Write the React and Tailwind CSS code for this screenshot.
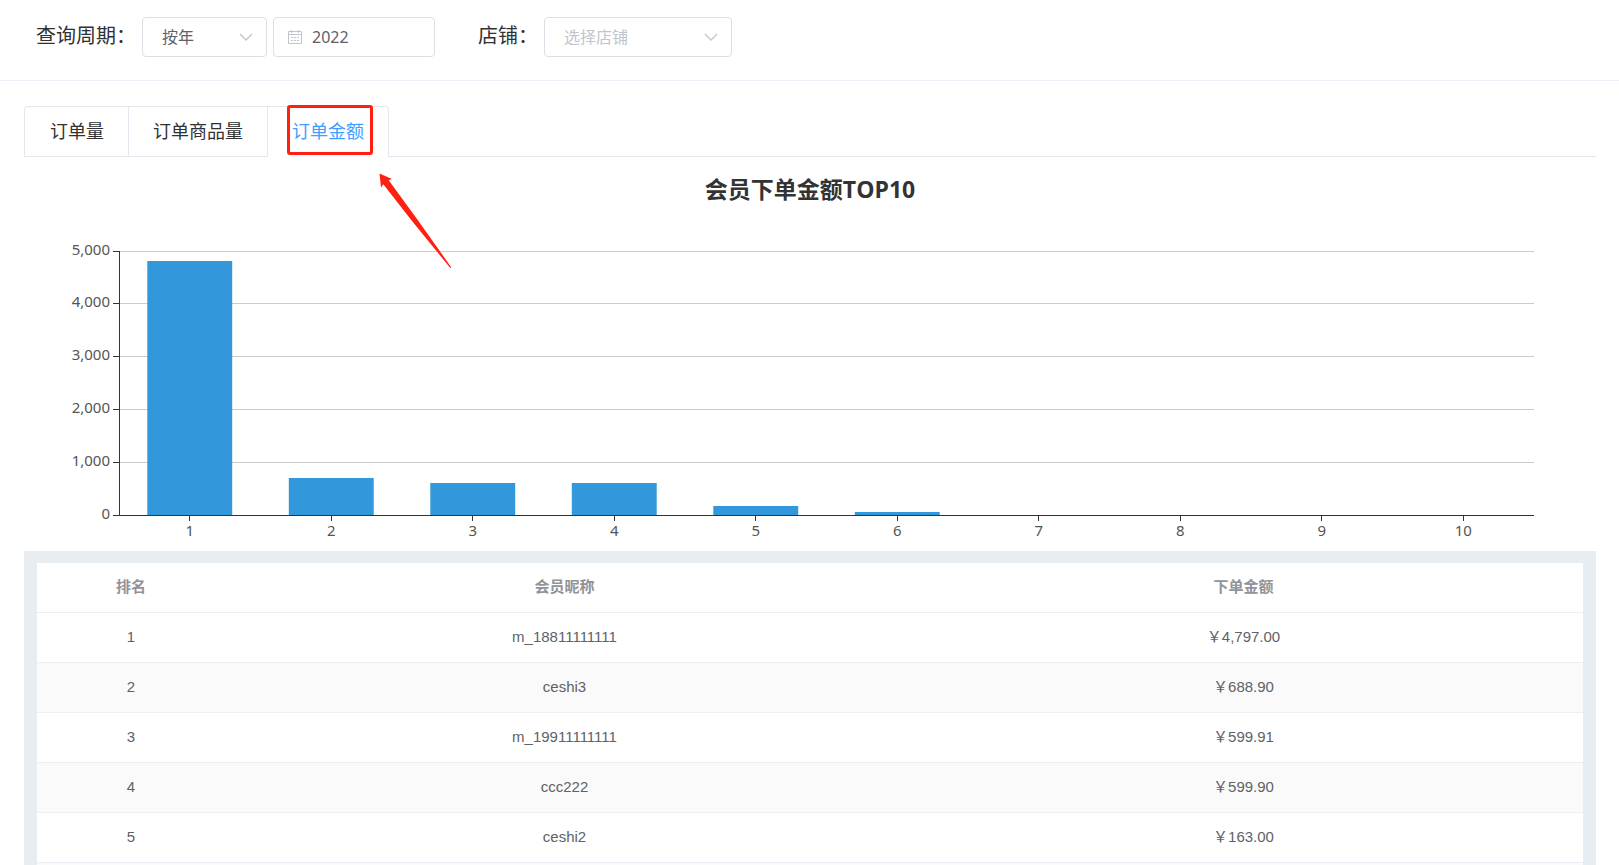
import React, { useState } from "react";

const tabs = ["订单量", "订单商品量", "订单金额"];

const rows = [
  { rank: 1, name: "m_18811111111", amount: "￥4,797.00" },
  { rank: 2, name: "ceshi3", amount: "￥688.90" },
  { rank: 3, name: "m_19911111111", amount: "￥599.91" },
  { rank: 4, name: "ccc222", amount: "￥599.90" },
  { rank: 5, name: "ceshi2", amount: "￥163.00" },
];

const values = [4797, 688.9, 599.91, 599.9, 163, 50, 0, 0, 0, 0];
const ticks = [0, 1000, 2000, 3000, 4000, 5000];
const MAX = 5000;
const PLOT_HEIGHT = 264;

const yOf = (v) => Math.floor(PLOT_HEIGHT * (1 - v / MAX));

function Chevron() {
  return (
    <svg
      viewBox="0 0 14 8"
      className="pointer-events-none absolute right-3.5 top-4 h-2 w-[14px]"
      fill="none"
      stroke="#c0c4cc"
      strokeWidth="1.3"
    >
      <path d="M1 1l6 6 6-6" />
    </svg>
  );
}

function CalendarIcon() {
  return (
    <svg
      viewBox="0 0 16 16"
      className="pointer-events-none absolute left-3.5 top-3 h-4 w-4"
      fill="none"
      stroke="#c0c4cc"
    >
      <path d="M1.5 2.5h13v12h-13z M1.5 5.5h13 M4.5 1v3 M11.5 1v3" />
      <path d="M4 8.5h2 M7 8.5h2 M10 8.5h2 M4 11.5h2 M7 11.5h2 M10 11.5h2" />
    </svg>
  );
}

function Filters() {
  const [period, setPeriod] = useState("year");
  const [year, setYear] = useState("2022");
  const [shop, setShop] = useState("");

  return (
    <header className="flex h-[81px] items-start border-b border-[#ebeef5] pl-9 pt-[17px]">
      <label htmlFor="period" className="w-[106px] text-xl leading-[38px]">
        查询周期：
      </label>
      <div className="relative">
        <select
          id="period"
          value={period}
          onChange={(e) => setPeriod(e.target.value)}
          className="h-10 w-[125px] appearance-none rounded border border-[#dcdfe6] bg-white pl-[19px] pt-0.5 text-base text-[#606266]"
        >
          <option value="year">按年</option>
        </select>
        <Chevron />
      </div>
      <div className="relative ml-1.5">
        <CalendarIcon />
        <input
          type="text"
          aria-label="年份"
          value={year}
          onChange={(e) => setYear(e.target.value)}
          className="h-10 w-[162px] rounded border border-[#dcdfe6] pl-[38px] font-['Noto_Sans'] text-base text-[#606266]"
        />
      </div>
      <label htmlFor="shop" className="ml-[43px] w-[66px] text-xl leading-[38px]">
        店铺：
      </label>
      <div className="relative">
        <select
          id="shop"
          value={shop}
          onChange={(e) => setShop(e.target.value)}
          className="h-10 w-[188px] appearance-none rounded border border-[#dcdfe6] bg-white pl-[19px] pt-0.5 text-base text-[#c0c4cc]"
        >
          <option value="">选择店铺</option>
        </select>
        <Chevron />
      </div>
    </header>
  );
}

function Tabs() {
  const [active, setActive] = useState(2);

  return (
    <div className="relative flex border-b border-[#e4e7ed]">
      <div role="tablist" className="-mb-px flex rounded-t border border-b-0 border-[#e4e7ed]">
        {tabs.map((tab, i) => (
          <button
            key={tab}
            type="button"
            role="tab"
            aria-selected={i === active}
            onClick={() => setActive(i)}
            className={`h-[50px] border-b text-lg ${
              i === 0 ? "pl-[25px] pr-6" : "border-l border-l-[#e4e7ed] px-6"
            } ${i === active ? "border-b-white text-[#409eff]" : "border-b-[#e4e7ed]"}`}
          >
            {tab}
          </button>
        ))}
      </div>
      {/* Callout on the amount tab */}
      <div className="pointer-events-none absolute left-[263px] -top-px h-[50px] w-[86px] rounded-[3px] border-3 border-[#ff2012]" />
      <svg
        viewBox="0 0 72 96"
        className="pointer-events-none absolute left-[355px] top-[67px] h-24 w-[72px]"
      >
        <path
          d="M0.5 0.5L13 6 9.7 7.3 38 46 72.3 94.3 71.3 95 33 48 4.3 11.3 2 14.5z"
          fill="#ff2012"
        />
      </svg>
    </div>
  );
}

function Chart() {
  return (
    <section className="h-[394px] pt-[18px]">
      <h2 className="text-center font-['Open_Sans','Noto_Sans_CJK_SC',sans-serif] text-[23px] leading-7 font-bold text-[#333]">
        会员下单金额TOP10
      </h2>
      <div className="ml-[95px] mr-[62px] mt-12 h-[264px]">
        <svg
          className="h-full w-full overflow-visible font-['Noto_Sans'] text-[15px]"
          role="img"
          aria-label="会员下单金额TOP10"
        >
          {ticks.map((t) => (
            <g key={t}>
              {t > 0 && (
                <line x1="0" x2="100%" y1={yOf(t)} y2={yOf(t)} stroke="#ccc" shapeRendering="crispEdges" />
              )}
              <line x1="-6" x2="0" y1={yOf(t)} y2={yOf(t)} stroke="#333" shapeRendering="crispEdges" />
              <text x="-9" y={yOf(t) + 4} textAnchor="end" fill="#555">
                {t.toLocaleString("en-US")}
              </text>
            </g>
          ))}
          {values.map((v, i) => (
            <g key={i}>
              <rect
                x={`${i * 10 + 2}%`}
                y={yOf(v)}
                width="6%"
                height={PLOT_HEIGHT - yOf(v)}
                fill="#3398db"
              />
              <line
                x1={`${i * 10 + 5}%`}
                x2={`${i * 10 + 5}%`}
                y1={PLOT_HEIGHT}
                y2={PLOT_HEIGHT + 6}
                stroke="#333"
                shapeRendering="crispEdges"
              />
              <text x={`${i * 10 + 5}%`} y={PLOT_HEIGHT + 21} textAnchor="middle" fill="#555">
                {i + 1}
              </text>
            </g>
          ))}
          <line x1="0" x2="0" y1="0" y2={PLOT_HEIGHT} stroke="#333" shapeRendering="crispEdges" />
          <line x1="0" x2="100%" y1={PLOT_HEIGHT} y2={PLOT_HEIGHT} stroke="#333" shapeRendering="crispEdges" />
        </svg>
      </div>
    </section>
  );
}

function RankTable() {
  return (
    <div className="bg-[#e8edf1] px-[13px] pt-3">
      <table className="w-full table-fixed border-separate border-spacing-0 bg-white text-center text-[15px] text-[#606266]">
        <colgroup>
          <col className="w-[188px]" />
          <col />
          <col />
        </colgroup>
        <thead>
          <tr className="text-[#909399]">
            {["排名", "会员昵称", "下单金额"].map((h) => (
              <th key={h} className="h-[50px] border-b border-[#ebeef5] p-0 font-bold">
                {h}
              </th>
            ))}
          </tr>
        </thead>
        <tbody>
          {rows.map((row) => (
            <tr key={row.rank} className="even:bg-[#fafafa]">
              <td className="h-[50px] border-b border-[#ebeef5] p-0">{row.rank}</td>
              <td className="border-b border-[#ebeef5] p-0">{row.name}</td>
              <td className="border-b border-[#ebeef5] p-0">{row.amount}</td>
            </tr>
          ))}
          <tr className="even:bg-[#fafafa]">
            <td colSpan={3} className="h-[50px]" />
          </tr>
        </tbody>
      </table>
    </div>
  );
}

function App() {
  return (
    <div className="h-screen overflow-hidden bg-white font-['Liberation_Sans','Noto_Sans_CJK_SC',sans-serif] text-[#303133]">
      <Filters />
      <main className="pl-6 pr-[23px] pt-[25px]">
        <Tabs />
        <Chart />
        <RankTable />
      </main>
    </div>
  );
}

export default App;
